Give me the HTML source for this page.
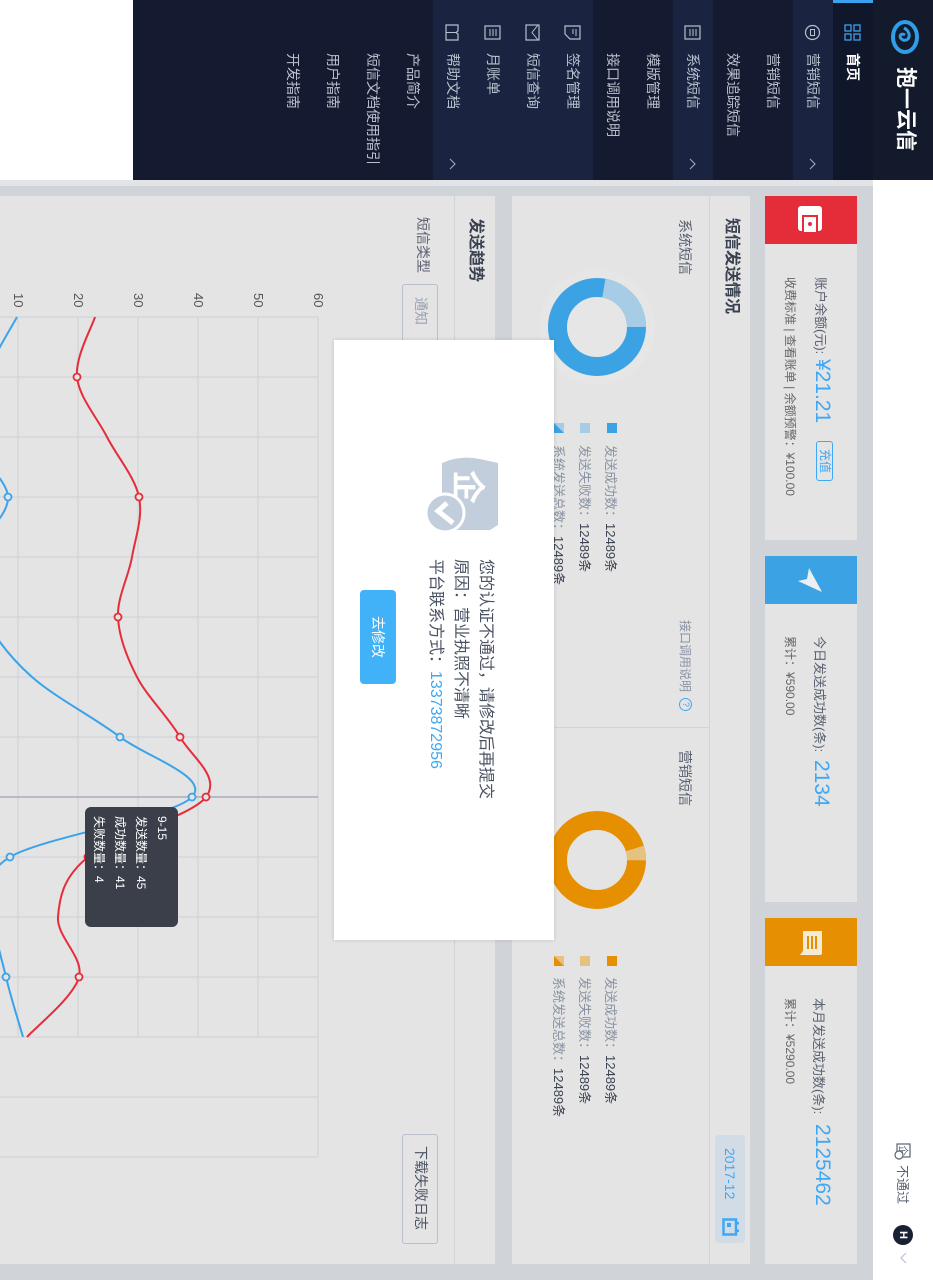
<!DOCTYPE html>
<html><head><meta charset="utf-8">
<style>
html,body{margin:0;padding:0;width:933px;height:1280px;overflow:hidden;background:#fff}
#r{position:absolute;left:0;top:0;width:1280px;height:933px;transform-origin:0 0;transform:translateX(933px) rotate(90deg);background:#d0d3d8;overflow:hidden;font-family:"Liberation Sans","Noto Sans CJK SC",sans-serif}
.a{position:absolute}
.t{position:absolute;white-space:nowrap;line-height:1}
.row{position:absolute;left:0;width:180px;height:40px}
.row .t{left:53px;top:13px;font-size:14px;color:#b9c0cd}
.row svg{position:absolute;left:24px;top:12px}
.row svg.ar{left:158px;top:16px}
.card{position:absolute;top:76px;height:92px;background:#e4e4e4}
.lbl{color:#8a93a3;font-size:13px}
.val{color:#3c4352;font-size:13px}
</style></head><body>
<div id="r">
<!-- header -->
<div class="a" style="left:180px;top:0;width:1100px;height:60px;background:#fff"></div>
<svg class="a" style="left:1143px;top:22px" width="17" height="17" viewBox="0 0 17 17"><rect x="1" y="1" width="13" height="13" fill="none" stroke="#5a6272" stroke-width="1.2"/><text x="7.5" y="11.5" font-size="10" text-anchor="middle" fill="#5a6272" font-family="Noto Sans CJK SC">企</text><circle cx="12" cy="12" r="4" fill="#fff" stroke="#5a6272" stroke-width="1.2"/></svg>
<div class="t" style="left:1165px;top:24px;font-size:13px;color:#5a6272">不通过</div>
<div class="a" style="left:1225px;top:20px;width:20px;height:20px;border-radius:50%;background:#1a2033;color:#fff;font-size:11px;font-weight:bold;text-align:center;line-height:20px">H</div>
<svg class="a" style="left:1252px;top:25px" width="12" height="10"><path d="M1 2 L6 7 L11 2" fill="none" stroke="#b6c2d6" stroke-width="1.2"/></svg>

<!-- sidebar -->
<div class="a" style="left:0;top:0;width:180px;height:800px;background:#141b30"></div>
<div class="a" style="left:0;top:800px;width:180px;height:133px;background:#fff"></div>
<div class="a" style="left:0;top:0;width:180px;height:60px;background:#131a2c"></div>
<svg class="a" style="left:18px;top:13px" width="38" height="30" viewBox="0 0 38 30"><ellipse cx="19" cy="15" rx="15" ry="12" fill="none" stroke="#2f9de8" stroke-width="4"/><path d="M10 16 C14 8 24 10 22 17 C20 22 14 20 17 15" fill="none" stroke="#2f9de8" stroke-width="3"/></svg>
<div class="t" style="left:67px;top:17px;font-size:21px;font-weight:bold;color:#fff">抱一云信</div>

<div class="row" style="top:60px;background:#11172a"><div class="a" style="left:0;top:0;width:3px;height:40px;background:#3aa0f0"></div>
<svg width="17" height="17"><g fill="none" stroke="#3aa0f0" stroke-width="1.3"><rect x="1" y="1" width="6" height="6"/><rect x="10" y="1" width="6" height="6"/><rect x="1" y="10" width="6" height="6"/><rect x="10" y="10" width="6" height="6"/></g></svg>
<div class="t" style="color:#fff;font-weight:bold">首页</div></div>
<div class="row" style="top:100px;background:#1a2340"><svg width="17" height="17"><circle cx="8.5" cy="8.5" r="7" fill="none" stroke="#b9c0cd" stroke-width="1.2"/><rect x="5.5" y="6.5" width="6" height="4" fill="none" stroke="#b9c0cd"/></svg><div class="t">营销短信</div><svg class="ar" width="12" height="8"><path d="M1 7 L6 2 L11 7" fill="none" stroke="#9aa3b4" stroke-width="1.2"/></svg></div>
<div class="row" style="top:140px"><div class="t">营销短信</div></div>
<div class="row" style="top:180px"><div class="t">效果追踪短信</div></div>
<div class="row" style="top:220px;background:#1a2340"><svg width="17" height="17"><rect x="2" y="1" width="13" height="15" fill="none" stroke="#b9c0cd" stroke-width="1.2"/><path d="M5 5h7M5 8h7M5 11h7" stroke="#b9c0cd"/></svg><div class="t">系统短信</div><svg class="ar" width="12" height="8"><path d="M1 7 L6 2 L11 7" fill="none" stroke="#9aa3b4" stroke-width="1.2"/></svg></div>
<div class="row" style="top:260px"><div class="t">模版管理</div></div>
<div class="row" style="top:300px"><div class="t">接口调用说明</div></div>
<div class="row" style="top:340px;background:#1a2340"><svg width="17" height="17"><path d="M2 1h13v10l-5 5H2z" fill="none" stroke="#b9c0cd" stroke-width="1.2"/><path d="M5 5h7M5 8h5" stroke="#b9c0cd"/></svg><div class="t">签名管理</div></div>
<div class="row" style="top:380px;background:#1a2340"><svg width="17" height="17"><rect x="1" y="2" width="15" height="13" fill="none" stroke="#b9c0cd" stroke-width="1.2"/><path d="M1 3l7.5 6L16 3" fill="none" stroke="#b9c0cd"/></svg><div class="t">短信查询</div></div>
<div class="row" style="top:420px;background:#1a2340"><svg width="17" height="17"><rect x="2" y="1" width="13" height="15" fill="none" stroke="#b9c0cd" stroke-width="1.2"/><path d="M5 5h7M5 8h7M5 11h7" stroke="#b9c0cd"/></svg><div class="t">月账单</div></div>
<div class="row" style="top:460px;background:#1a2340"><svg width="17" height="17"><path d="M1 3h6l1.5 2L10 3h6v12H1z" fill="none" stroke="#b9c0cd" stroke-width="1.2"/><path d="M8.5 5v10" stroke="#b9c0cd"/></svg><div class="t">帮助文档</div><svg class="ar" width="12" height="8"><path d="M1 7 L6 2 L11 7" fill="none" stroke="#9aa3b4" stroke-width="1.2"/></svg></div>
<div class="row" style="top:500px"><div class="t">产品简介</div></div>
<div class="row" style="top:540px"><div class="t">短信文档使用指引</div></div>
<div class="row" style="top:580px"><div class="t">用户指南</div></div>
<div class="row" style="top:620px"><div class="t">开发指南</div></div>

<!-- content light strip -->
<div class="a" style="left:180px;top:60px;width:6px;height:873px;background:#e2e4e8"></div>

<!-- cards -->
<div class="card" style="left:196px;width:344px">
 <div class="a" style="left:0;top:0;width:48px;height:92px;background:#e52d3a"></div>
 <svg class="a" style="left:10px;top:35px" width="26" height="25" viewBox="0 0 26 25"><rect x="0" y="0" width="25" height="24" rx="3" fill="#fff"/><rect x="9" y="4" width="17" height="16" fill="#e52d3a"/><rect x="11" y="6" width="15" height="12" fill="#fff"/><circle cx="18" cy="12" r="2" fill="#e52d3a"/></svg>
 <div class="t" style="left:81px;top:30px;font-size:13px;color:#5a6070">账户余额(元):</div>
 <div class="t" style="left:163px;top:24px;font-size:21px;color:#3ea8f5">¥21.21</div>
 <div class="a" style="left:245px;top:24px;width:38px;height:15px;border:1px solid #3ea8f5;border-radius:3px;color:#3ea8f5;font-size:12px;text-align:center;line-height:15px">充值</div>
 <div class="t" style="left:81px;top:61px;font-size:12px;color:#666">收费标准 | 查看账单 | 余额预警：¥100.00</div>
</div>
<div class="card" style="left:556px;width:346px">
 <div class="a" style="left:0;top:0;width:48px;height:92px;background:#3ba3e4"></div>
 <svg class="a" style="left:0;top:0" width="48" height="92"><polygon points="12,48 36,35 25,59 23,50" fill="#eceff3"/></svg>
 <div class="t" style="left:80px;top:31px;font-size:13px;color:#5a6070">今日发送成功数(条):</div>
 <div class="t" style="left:204px;top:25px;font-size:21px;color:#3ea8f5">2134</div>
 <div class="t" style="left:80px;top:61px;font-size:12px;color:#666">累计：¥590.00</div>
</div>
<div class="card" style="left:918px;width:346px">
 <div class="a" style="left:0;top:0;width:48px;height:92px;background:#e68f00"></div>
 <svg class="a" style="left:11px;top:33px" width="28" height="28" viewBox="0 0 28 28"><path d="M2 2h22a2 2 0 0 1 2 2v20l-4-3H2z" fill="#f3ead8"/><path d="M7 8h13M7 12h13M7 16h13" stroke="#e68f00" stroke-width="2"/></svg>
 <div class="t" style="left:80px;top:32px;font-size:13px;color:#5a6070">本月发送成功数(条):</div>
 <div class="t" style="left:206px;top:24px;font-size:21px;color:#3ea8f5">2125462</div>
 <div class="t" style="left:80px;top:61px;font-size:12px;color:#666">累计：¥5290.00</div>
</div>

<!-- panel 1 -->
<div class="a" style="left:196px;top:183px;width:1068px;height:238px;background:#e4e4e4"></div>
<div class="a" style="left:196px;top:223px;width:1068px;height:1px;background:#d0d3d8"></div>
<div class="t" style="left:218px;top:194px;font-size:16px;font-weight:bold;color:#3a4150">短信发送情况</div>
<div class="a" style="left:1135px;top:188px;width:108px;height:30px;background:#d2dce6;border-radius:4px"></div>
<div class="t" style="left:1148px;top:196px;font-size:14px;color:#3ea8f5">2017-12</div>
<svg class="a" style="left:1218px;top:194px" width="18" height="17"><rect x="1.5" y="3" width="15" height="12.5" fill="none" stroke="#3ea8f5" stroke-width="2.5"/><rect x="4" y="0" width="2.5" height="4" fill="#3ea8f5"/><rect x="11.5" y="0" width="2.5" height="4" fill="#3ea8f5"/><rect x="5" y="8" width="4" height="4" fill="#3ea8f5"/></svg>
<div class="a" style="left:727px;top:224px;width:1px;height:197px;background:#d0d3d8"></div>
<div class="t" style="left:219px;top:241px;font-size:14px;color:#5a6070">系统短信</div>
<div class="t" style="left:750px;top:241px;font-size:14px;color:#5a6070">营销短信</div>
<div class="t" style="left:620px;top:242px;font-size:12px;color:#8a93a3">接口调用说明</div>
<div class="a" style="left:698px;top:241px;width:11px;height:11px;border:1px solid #3ea8f5;border-radius:50%;color:#3ea8f5;font-size:9px;text-align:center;line-height:11px">?</div>
<svg class="a" style="left:0;top:0" width="1280" height="933">
 <circle cx="327" cy="336" r="58" fill="#e7e7e7" opacity="0.6"/>
 <circle cx="327" cy="336" r="39.5" fill="none" stroke="#3ba3e4" stroke-width="19"/>
 <circle cx="327" cy="336" r="39.5" fill="none" stroke="#a6cce6" stroke-width="19" stroke-dasharray="55 300" transform="rotate(-170 327 336)"/>
 <circle cx="860" cy="336" r="39.5" fill="none" stroke="#e68f00" stroke-width="19"/>
 <circle cx="860" cy="336" r="39.5" fill="none" stroke="#e5c182" stroke-width="19" stroke-dasharray="12 300" transform="rotate(-107 860 336)"/>
 <rect x="423" y="316" width="10" height="10" fill="#3ba3e4"/>
 <rect x="423" y="343" width="10" height="10" fill="#a6cce6"/>
 <polygon points="423,369 433,369 423,379" fill="#a6cce6"/><polygon points="433,369 433,379 423,379" fill="#3ba3e4"/>
 <rect x="956" y="316" width="10" height="10" fill="#e68f00"/>
 <rect x="956" y="343" width="10" height="10" fill="#e5c182"/>
 <polygon points="956,369 966,369 956,379" fill="#e5c182"/><polygon points="966,369 966,379 956,379" fill="#e68f00"/>
</svg>
<div class="t" style="left:445px;top:315px"><span class="lbl">发送成功数：</span><span class="val">12489条</span></div>
<div class="t" style="left:445px;top:341px"><span class="lbl">发送失败数：</span><span class="val">12489条</span></div>
<div class="t" style="left:445px;top:367px"><span class="lbl">系统发送总数：</span><span class="val">12489条</span></div>
<div class="t" style="left:977px;top:315px"><span class="lbl">发送成功数：</span><span class="val">12489条</span></div>
<div class="t" style="left:977px;top:341px"><span class="lbl">发送失败数：</span><span class="val">12489条</span></div>
<div class="t" style="left:977px;top:367px"><span class="lbl">系统发送总数：</span><span class="val">12489条</span></div>

<!-- panel 2 -->
<div class="a" style="left:196px;top:438px;width:1068px;height:495px;background:#e4e4e4"></div>
<div class="a" style="left:196px;top:478px;width:1068px;height:1px;background:#d0d3d8"></div>
<div class="t" style="left:218px;top:450px;font-size:16px;font-weight:bold;color:#3a4150">发送趋势</div>
<div class="t" style="left:217px;top:503px;font-size:14px;color:#5a6070">短信类型</div>
<div class="a" style="left:284px;top:495px;width:120px;height:34px;border:1px solid #b9c0cc;border-radius:3px"></div>
<div class="t" style="left:297px;top:505px;font-size:14px;color:#9aa2b0">通知</div>
<div class="a" style="left:1134px;top:495px;width:108px;height:34px;border:1px solid #b9c0cc;border-radius:3px"></div>
<div class="t" style="left:1146px;top:505px;font-size:14px;color:#4a5262">下载失败日志</div>
<div class="t" style="left:293px;top:608px;font-size:13px;color:#555">60</div>
<div class="t" style="left:293px;top:668px;font-size:13px;color:#555">50</div>
<div class="t" style="left:293px;top:728px;font-size:13px;color:#555">40</div>
<div class="t" style="left:293px;top:788px;font-size:13px;color:#555">30</div>
<div class="t" style="left:293px;top:848px;font-size:13px;color:#555">20</div>
<div class="t" style="left:293px;top:908px;font-size:13px;color:#555">10</div>
<svg class="a" id="ch" style="left:0;top:0" width="1280" height="933">
 <g stroke="#d3d6db" stroke-width="1.5" fill="none" id="grid"></g>
 <line x1="797" y1="615" x2="797" y2="933" stroke="#a9b0bc" stroke-width="1.5"/>
 <path id="pb" fill="none" stroke="#3aa3ea" stroke-width="2"/>
 <path id="pr" fill="none" stroke="#e52d3a" stroke-width="2"/>
 <g id="dots"></g>
</svg>
<div class="a" style="left:807px;top:755px;width:120px;height:93px;background:#3a3f4a;border-radius:6px"></div>
<div class="t" style="left:816px;top:765px;font-size:12px;color:#fff">9-15</div>
<div class="t" style="left:816px;top:786px;font-size:12px;color:#fff">发送数量：45</div>
<div class="t" style="left:816px;top:807px;font-size:12px;color:#fff">成功数量：41</div>
<div class="t" style="left:816px;top:828px;font-size:12px;color:#fff">失败数量：4</div>

<!-- modal -->
<div class="a" style="left:340px;top:379px;width:600px;height:220px;background:#fff;box-shadow:0 0 4px rgba(0,0,0,0.15)"></div>
<svg class="a" style="left:457px;top:433px" width="76" height="76" viewBox="0 0 76 76">
 <path d="M6 2 L68 2 L73 10 L73 58 L6 58 Q-2 40 2 20 Z" fill="#c3cedc"/>
 <text x="30" y="44" font-size="34" font-weight="bold" fill="#fff" text-anchor="middle" font-family="Noto Sans CJK SC">企</text>
 <circle cx="56" cy="55" r="19" fill="#c3cedc" stroke="#fff" stroke-width="3"/>
 <path d="M46 53 L54 62 L66 47" fill="none" stroke="#fff" stroke-width="5"/>
</svg>
<div class="t" style="left:559px;top:440px;font-size:16px;color:#4a5262">您的认证不通过，请修改后再提交</div>
<div class="t" style="left:559px;top:465px;font-size:16px;color:#4a5262">原因：营业执照不清晰</div>
<div class="t" style="left:559px;top:490px;font-size:16px;color:#4a5262">平台联系方式：<span style="color:#3ea8f5">13373872956</span></div>
<div class="a" style="left:590px;top:537px;width:94px;height:36px;background:#41b1f8;border-radius:4px;color:#fff;font-size:14px;text-align:center;line-height:36px">去修改</div>
</div>
<script>
(function(){
 var ns="http://www.w3.org/2000/svg";
 var g=document.getElementById('grid');
 function ln(x1,y1,x2,y2){var l=document.createElementNS(ns,'line');l.setAttribute('x1',x1);l.setAttribute('y1',y1);l.setAttribute('x2',x2);l.setAttribute('y2',y2);g.appendChild(l);}
 [615,675,735,795,855,915].forEach(function(y){ln(317,y,y==615?1157:1037,y);});
 for(var x=317;x<=1037;x+=60){ln(x,615,x,933);}
 ln(1097,615,1097,933);ln(1157,615,1157,933);
 function P(a){return a.map(function(p){return [p[0],933-p[1]];});}
 var red=P([[317,95],[377,77],[437,107],[497,139],[557,132],[617,118],[677,137],[737,180],[797,206],[857,88],[917,58],[977,79],[1037,27]]);
 var blue=P([[317,17],[377,-15],[437,-30],[497,8],[557,-25],[617,-15],[677,32],[737,120],[797,192],[857,10],[917,-5],[977,6],[1037,23]]);
 function path(p){var d='M'+p[0][0]+','+p[0][1];for(var i=0;i<p.length-1;i++){var p0=p[i-1]||p[i],p1=p[i],p2=p[i+1],p3=p[i+2]||p2;
  d+=' C'+(p1[0]+(p2[0]-p0[0])/6)+','+(p1[1]+(p2[1]-p0[1])/6)+' '+(p2[0]-(p3[0]-p1[0])/6)+','+(p2[1]-(p3[1]-p1[1])/6)+' '+p2[0]+','+p2[1];}return d;}
 document.getElementById('pr').setAttribute('d',path(red));
 document.getElementById('pb').setAttribute('d',path(blue));
 var dots=document.getElementById('dots');
 function dot(p,c){var e=document.createElementNS(ns,'circle');e.setAttribute('cx',p[0]);e.setAttribute('cy',p[1]);e.setAttribute('r',3.5);e.setAttribute('fill','#e4e4e4');e.setAttribute('stroke',c);e.setAttribute('stroke-width',1.8);dots.appendChild(e);}
 [1,3,5,7,8,9,11].forEach(function(i){dot(red[i],'#e52d3a');});
 [3,7,8,9,11].forEach(function(i){dot(blue[i],'#3aa3ea');});
})();
</script>
</body></html>
